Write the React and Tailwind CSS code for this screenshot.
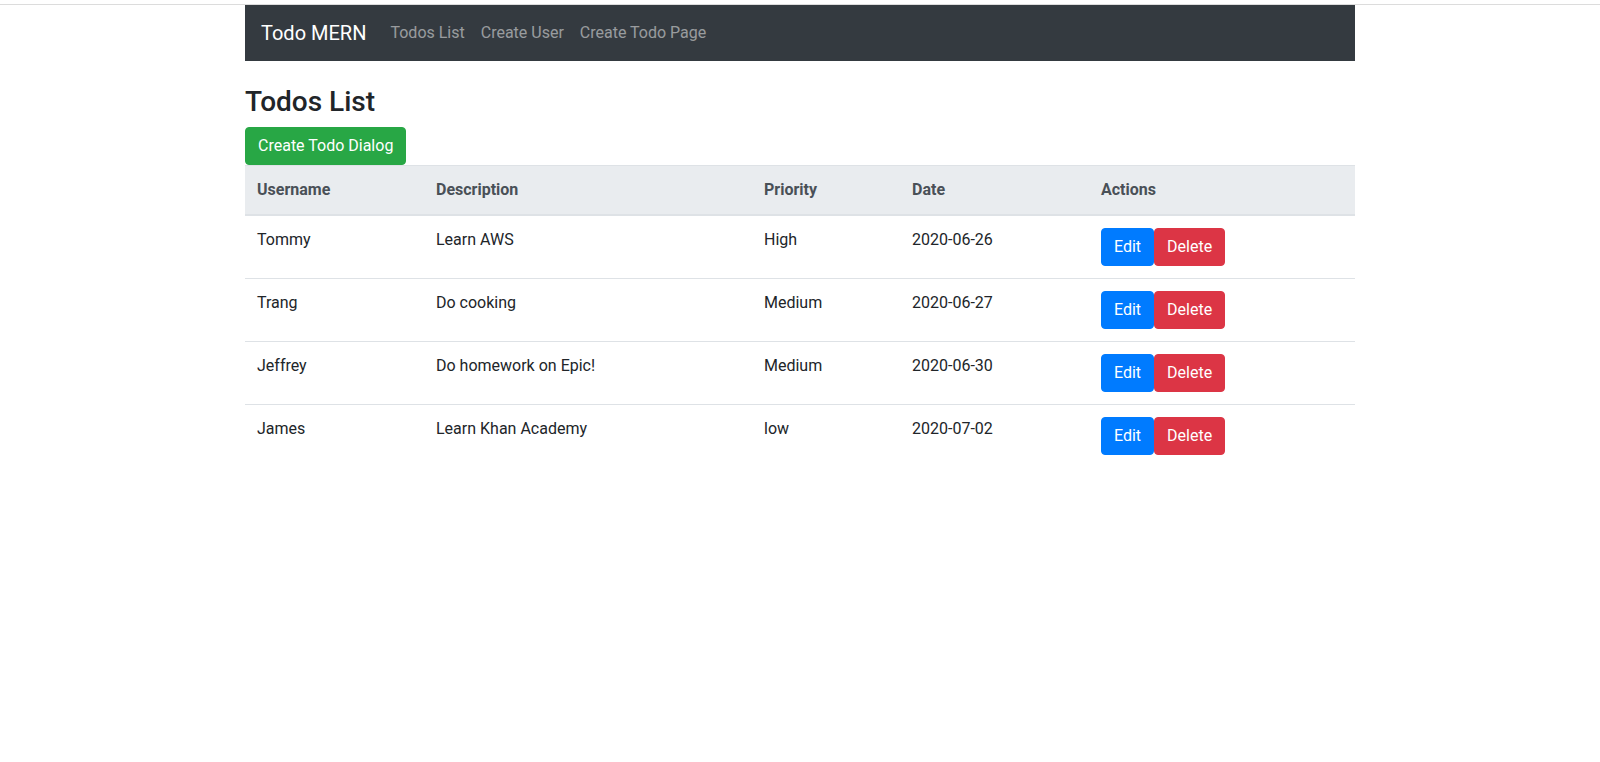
import React from 'react';

const todos = [
  { username: 'Tommy', description: 'Learn AWS', priority: 'High', date: '2020-06-26' },
  { username: 'Trang', description: 'Do cooking', priority: 'Medium', date: '2020-06-27' },
  { username: 'Jeffrey', description: 'Do homework on Epic!', priority: 'Medium', date: '2020-06-30' },
  { username: 'James', description: 'Learn Khan Academy', priority: 'low', date: '2020-07-02' },
];

const font = { fontFamily: '"Segoe UI", Roboto, "Noto Sans", sans-serif' };

export default function App() {
  return (
    <div className="min-h-[762px] bg-white text-[#212529] text-base leading-normal" style={font}>
      <div className="h-[5px] border-b border-[#dcdcdc]" />
      <div className="w-[1110px] mx-auto">
        {/* Navbar */}
        <nav className="h-[56px] bg-[#343a40] flex items-center px-4">
          <a className="text-white text-[20px] leading-[30px] mr-4" href="#">Todo MERN</a>
          <div className="flex">
            <a className="px-2 text-[rgba(255,255,255,0.5)]" href="#">Todos List</a>
            <a className="px-2 text-[rgba(255,255,255,0.5)]" href="#">Create User</a>
            <a className="px-2 text-[rgba(255,255,255,0.5)]" href="#">Create Todo Page</a>
          </div>
        </nav>
        <div className="h-6" />

        <h3 className="text-[28px] leading-[1.2] font-medium mb-2">Todos List</h3>
        <button className="bg-[#28a745] text-white px-3 py-[6px] rounded border border-[#28a745]">
          Create Todo Dialog
        </button>

        {/* Tabla */}
        <table className="w-full border-collapse table-fixed">
          <thead className="bg-[#e9ecef] text-[#495057]">
            <tr>
              <th className="w-[179px] text-left font-bold p-3 border-t border-[#dee2e6] border-b-2">Username</th>
              <th className="w-[328px] text-left font-bold p-3 border-t border-[#dee2e6] border-b-2">Description</th>
              <th className="w-[148px] text-left font-bold p-3 border-t border-[#dee2e6] border-b-2">Priority</th>
              <th className="w-[189px] text-left font-bold p-3 border-t border-[#dee2e6] border-b-2">Date</th>
              <th className="text-left font-bold p-3 border-t border-[#dee2e6] border-b-2">Actions</th>
            </tr>
          </thead>
          <tbody>
            {todos.map((t, i) => (
              <tr key={i} className={i > 0 ? 'border-t border-[#dee2e6]' : ''}>
                <td className="p-3 align-top">{t.username}</td>
                <td className="p-3 align-top">{t.description}</td>
                <td className="p-3 align-top">{t.priority}</td>
                <td className="p-3 align-top">{t.date}</td>
                <td className="p-3 align-top">
                  <div className="flex">
                    <button className="bg-[#007bff] text-white px-3 py-[6px] rounded border border-[#007bff]">Edit</button>
                    <button className="bg-[#dc3545] text-white px-3 py-[6px] rounded border border-[#dc3545]">Delete</button>
                  </div>
                </td>
              </tr>
            ))}
          </tbody>
        </table>
      </div>
    </div>
  );
}
